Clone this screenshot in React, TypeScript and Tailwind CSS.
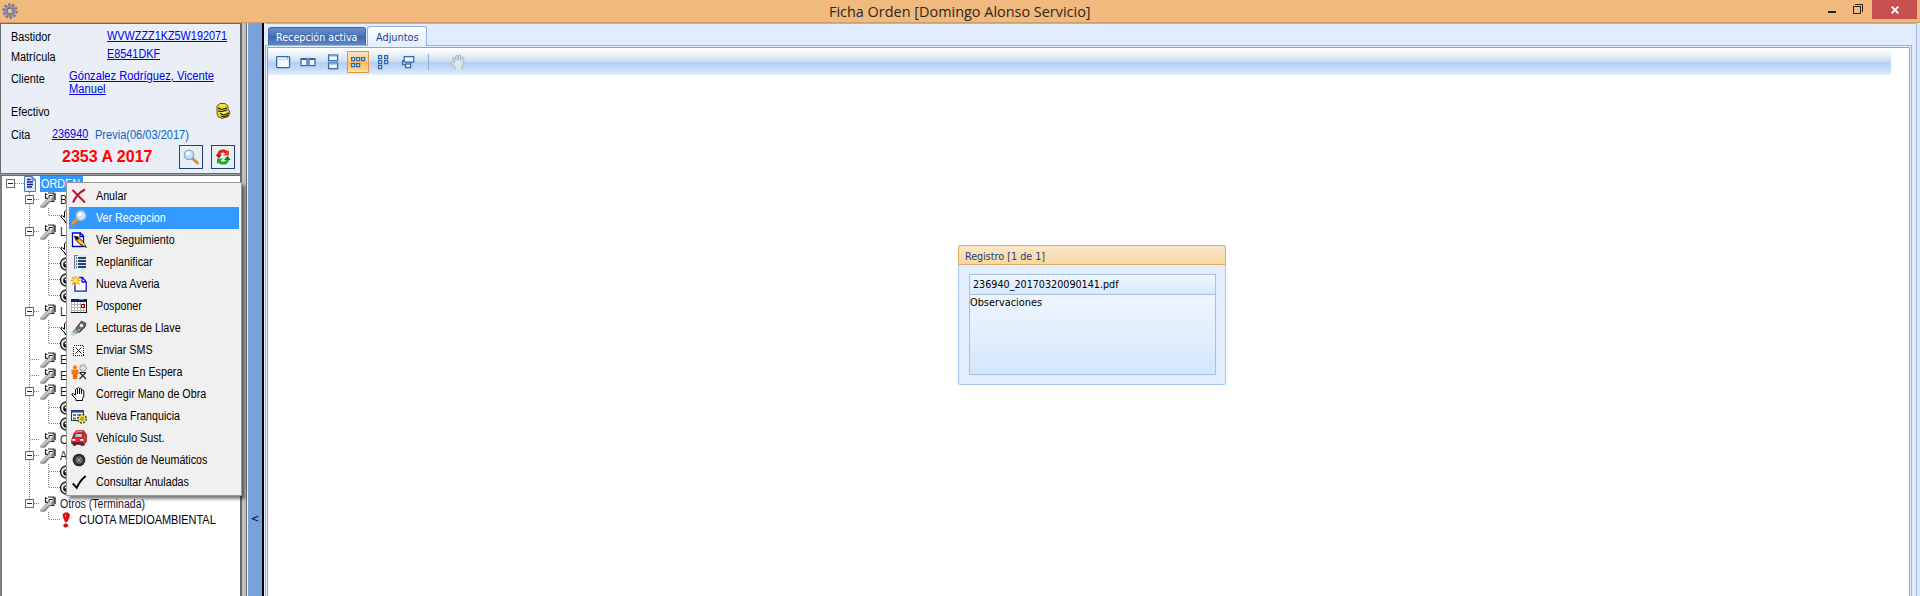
import React from "react";

const MS_BASE = "block w-max origin-left whitespace-nowrap text-[12px] leading-3 font-['Liberation_Sans',sans-serif]";
const MS = `${MS_BASE} scale-x-[0.905]`;
const TAHOMA_BASE = "block w-max origin-left whitespace-nowrap text-[11px] leading-3 font-['DejaVu_Sans_Condensed','DejaVu_Sans',sans-serif] [font-stretch:condensed]";
const TAHOMA = `${TAHOMA_BASE} scale-x-[0.97]`;

type IconProps = { children: React.ReactNode; size?: number; crisp?: boolean };

function Icon({ children, size = 16, crisp = false }: IconProps) {
  return (
    <svg width={size} height={size} viewBox="0 0 16 16" fill="none" className="block shrink-0" shapeRendering={crisp ? "crispEdges" : "auto"}>
      {children}
    </svg>
  );
}

const Handset = () => (
  <path d="M5 14.5 V13 L1 9 V7.8 H2.5 L4.5 9.2 V3.5 L5.5 2.7 L6.5 3.5 V2.3 L7.5 1.5 L8.5 2.3 V3 L9.5 2.2 L10.5 3 V4.5 L11.7 3.9 L12.8 5 V10 L11.5 12.7 V14.5 Z M6.5 3.5 V8 M8.5 3 V8 M10.5 4.5 V8" fill="#fff" stroke="#000" strokeWidth="1" />
);

const Wrench = () => (
  <Icon>
    <path d="M0.5 13.5 L6.5 7.5 L5.5 4.5 L8 6.5 H11 L12.5 4.5 V1 H15.5 V8 L13.5 10 L9.5 10.5 L5 15.8 L0.5 15.8 Z" fill="#8c8c8c" />
    <path d="M5.5 1 V6.5 M5 2.5 H7.5 M5 6.3 H8 M8 1 H14.5 M15 1.5 V8 M9 3.5 H12.5 M9 3.5 V6 M11 9.5 H14.5" stroke="#222" strokeWidth="1.1" />
    <path d="M2 14 L8.5 8 H11.5" stroke="#d8d8d8" strokeWidth="1.4" />
  </Icon>
);

const Eye = () => (
  <Icon>
    <circle cx="6.5" cy="8" r="6" fill="#e8e8e8" stroke="#222" strokeWidth="1.3" />
    <circle cx="6.5" cy="8.5" r="3.3" fill="#111" />
    <circle cx="5.7" cy="7.5" r="1" fill="#fff" />
  </Icon>
);

const menuItems: { label: string; icon: React.ReactNode }[] = [
  { label: "Anular", icon: <Icon><path d="M1.5 2 L14 14.5 M14 1.5 C9 4 4.5 9 2 14.5" stroke="#c8102e" strokeWidth="2" /></Icon> },
  {
    label: "Ver Recepcion",
    icon: (
      <Icon>
        <path d="M1 14.5 L7 9.5" stroke="#d98032" strokeWidth="3" strokeLinecap="round" />
        <path d="M1 13.3 L6 9" stroke="#f5bd82" strokeWidth="1" />
        <circle cx="10" cy="5.6" r="4.9" fill="#c8ebfb" stroke="#9ab6cc" strokeWidth="1.4" />
        <circle cx="8.8" cy="4.2" r="2" fill="#fff" />
      </Icon>
    ),
  },
  {
    label: "Ver Seguimiento",
    icon: (
      <Icon>
        <path d="M1.5 1 H9.5 L12.5 4 V14.5 H1.5 Z M9 1 V4.5 H12.5" fill="#fff" stroke="#0000c8" strokeWidth="1.3" />
        <path d="M3.5 4 L8 5.5 L12 9.5 L15.5 15.5 L9 12.5 L5 8.5 Z" fill="#e8901a" stroke="#111" strokeWidth="0.8" />
        <path d="M3.5 4 L7 5 L7.5 7 L5.5 8 Z" fill="#000" />
        <path d="M8 8.5 L13.5 13" stroke="#ffe04a" strokeWidth="1.4" />
      </Icon>
    ),
  },
  {
    label: "Replanificar",
    icon: (
      <Icon crisp>
        <rect x="3" y="1" width="12" height="14" fill="#d9e8f4" />
        <path d="M3.5 1 V15 M3 1.5 H7" stroke="#8a62b8" />
        <path d="M7 4 H15 M7 7 H15 M7 10 H15 M7 13 H15" stroke="#25456f" strokeWidth="1.5" />
        <path d="M5 4 H6 M5 7 H6 M5 10 H6 M5 13 H6" stroke="#3d9d74" strokeWidth="1.5" />
      </Icon>
    ),
  },
  {
    label: "Nueva Averia",
    icon: (
      <Icon>
        <path d="M4 4 V15.2 H15.2 V6 L11.5 1.5 H7 M11 1.5 V6 H15" fill="#fff" stroke="#1010e0" strokeWidth="1.3" />
        <path d="M4.5 0 V10 M0 4.5 H9.5 M1 1 L8.5 8.5 M8.5 1 L1 8.5" stroke="#f0a800" strokeWidth="1.5" />
        <circle cx="4.6" cy="4.6" r="2" fill="#ffef5a" />
      </Icon>
    ),
  },
  {
    label: "Posponer",
    icon: (
      <Icon crisp>
        <rect x="0" y="1" width="16" height="14" fill="#fff" />
        <path d="M0 6.5 H16 M0 9.5 H16 M0 12.5 H16 M3.5 4 V14 M6.5 4 V14 M9.5 4 V14 M12.5 4 V14 M0.5 3 V14" stroke="#b5b5b5" />
        <rect x="0" y="1" width="16" height="3" fill="#0c1c74" />
        <rect x="8" y="1" width="5" height="1" fill="#7888ca" />
        <path d="M15.5 2 V15 M0 14.5 H16" stroke="#111" />
        <rect x="10.5" y="6.5" width="3" height="3" stroke="#b00000" />
      </Icon>
    ),
  },
  {
    label: "Lecturas de Llave",
    icon: (
      <Icon>
        <path d="M5 8 L10.5 1 L15 3.5 L14 7 L8.5 12.5 L5 11 Z" fill="#666" stroke="#333" strokeWidth="0.8" />
        <path d="M4 9 L2 11.5 L5.5 13.5 L7.5 12" fill="#aaa" stroke="#777" strokeWidth="0.8" />
        <path d="M1.5 11.5 L0.8 15 M4.5 13 L2 15.5" stroke="#9fdd9f" strokeWidth="1.5" />
        <circle cx="10.5" cy="5.5" r="1.7" fill="#eee" />
        <path d="M7 9.5 L9 10.5" stroke="#ddd" />
      </Icon>
    ),
  },
  {
    label: "Enviar SMS",
    icon: (
      <Icon>
        <rect x="2.5" y="3.5" width="10" height="10" fill="#fff" stroke="#111" strokeDasharray="1 1" shapeRendering="crispEdges" />
        <path d="M4.5 5.5 L10.5 11.5 M10.5 5.5 L4.5 11.5" stroke="#222" strokeWidth="1" />
      </Icon>
    ),
  },
  {
    label: "Cliente En Espera",
    icon: (
      <Icon>
        <circle cx="4" cy="3.3" r="2" fill="#f47a10" />
        <path d="M0.5 5.5 H7.5 V10.5 H6.3 V15 H1.8 V10.5 H0.5 Z" fill="#f47a10" />
        <path d="M4 10 V15" stroke="#d65500" />
        <circle cx="12" cy="4" r="3.2" fill="#cfe3ef" stroke="#8a9aa8" />
        <path d="M8.5 8.5 L15 15 M15 8.5 L8.5 15 M9 8.5 H15" stroke="#222" strokeWidth="1.1" />
      </Icon>
    ),
  },
  { label: "Corregir Mano de Obra", icon: <Icon><Handset /></Icon> },
  {
    label: "Nueva Franquicia",
    icon: (
      <Icon>
        <rect x="0.5" y="2.5" width="12" height="10" fill="#fff" stroke="#2b3a55" />
        <rect x="0" y="2" width="13" height="2.5" fill="#1c4590" />
        <path d="M2 7 H5 M2 10.5 H5" stroke="#2f9848" strokeWidth="2" />
        <path d="M6 7 H9 M6 10 H8" stroke="#356ac8" strokeWidth="1.5" />
        <circle cx="11" cy="10.8" r="4" stroke="#4a4000" strokeWidth="1.8" strokeDasharray="2 1.1" />
        <circle cx="11" cy="10.8" r="3.5" fill="#f5e030" />
        <circle cx="11" cy="10.8" r="1.3" fill="#fff" stroke="#333" strokeWidth="0.7" />
      </Icon>
    ),
  },
  {
    label: "Vehículo Sust.",
    icon: (
      <Icon>
        <path d="M1 9 L3.5 2.5 L6 0.6 H12.5 L15.4 4.5 V11.5 L13 14.5 H2 L0.5 12.5 Z" fill="#f02a2a" stroke="#a01010" strokeWidth="0.8" />
        <path d="M3.2 7.5 L5 3.5 H11 L11.7 7.5 Z M12.8 6.5 L12.2 3 L14.5 5.5 Z" fill="#a9c7ee" stroke="#511" strokeWidth="0.6" />
        <path d="M4.5 2.7 L7 1.3 H11.5" stroke="#ff9a9a" />
        <rect x="1.3" y="9" width="3" height="1.8" fill="#fff" />
        <rect x="9.3" y="9" width="3" height="1.8" fill="#fff" />
        <path d="M0.5 13 H12.5 M2 15 H5 M9.5 15 H13.5" stroke="#22284a" strokeWidth="1.5" />
      </Icon>
    ),
  },
  {
    label: "Gestión de Neumáticos",
    icon: (
      <Icon>
        <circle cx="8" cy="8" r="6.3" fill="#2b2829" />
        <circle cx="8" cy="8" r="3.5" fill="#8a8687" stroke="#555" />
        <path d="M8 5 V11 M5 8 H11" stroke="#444" />
        <circle cx="8" cy="8" r="1" fill="#ccc" />
      </Icon>
    ),
  },
  { label: "Consultar Anuladas", icon: <Icon><path d="M1.8 9.3 L5.7 13.8 C8 9 11 4.5 14.8 2" stroke="#000" strokeWidth="2" /></Icon> },
];

type TreeRowData = { level: 1 | 2; kind: "wrench" | "hand" | "eye" | "alert"; text?: string; box?: boolean; last?: boolean };

const treeRows: TreeRowData[] = [
  { level: 1, kind: "wrench", text: "B", box: true },
  { level: 2, kind: "hand", last: true },
  { level: 1, kind: "wrench", text: "L", box: true },
  { level: 2, kind: "hand" },
  { level: 2, kind: "eye" },
  { level: 2, kind: "eye" },
  { level: 2, kind: "eye", last: true },
  { level: 1, kind: "wrench", text: "L", box: true },
  { level: 2, kind: "hand" },
  { level: 2, kind: "eye", last: true },
  { level: 1, kind: "wrench", text: "E" },
  { level: 1, kind: "wrench", text: "E" },
  { level: 1, kind: "wrench", text: "E", box: true },
  { level: 2, kind: "eye" },
  { level: 2, kind: "eye", last: true },
  { level: 1, kind: "wrench", text: "O" },
  { level: 1, kind: "wrench", text: "A", box: true },
  { level: 2, kind: "eye" },
  { level: 2, kind: "eye", last: true },
  { level: 1, kind: "wrench", text: "Otros (Terminada)", box: true, last: true },
  { level: 2, kind: "alert", text: "CUOTA MEDIOAMBIENTAL", last: true },
];

function Expander({ x }: { x: number }) {
  return (
    <g shapeRendering="crispEdges">
      <rect x={x - 4.5} y="3.5" width="8" height="8" fill="#fff" stroke="#6b6b6b" />
      <path d={`M${x - 3} 7.5 H${x + 2}`} stroke="#222" />
    </g>
  );
}

function TreeRow({ row, final }: { row: TreeRowData; final: boolean }) {
  const first = row.level === 1;
  return (
    <div className="flex h-4 items-center">
      <svg width={first ? 38 : 58} height="16" className="block shrink-0">
        <g stroke="#808080" strokeDasharray="1 1" shapeRendering="crispEdges">
          {!final && <path d={first && row.last ? "M27.5 0 V8" : "M27.5 0 V16"} />}
          {first ? <path d="M28 7.5 H38" /> : <path d={`M46.5 0 V${row.last ? 8 : 16} M47 7.5 H58`} />}
        </g>
        {row.box && <Expander x={28} />}
      </svg>
      {row.kind === "wrench" && <Wrench />}
      {row.kind === "eye" && <Eye />}
      {row.kind === "hand" && <Icon><Handset /></Icon>}
      {row.kind === "alert" && (
        <Icon>
          <path d="M2.8 2.5 L5 0.8 H8 L9.6 2.5 L9 6 L6.8 10 H5.4 L3.5 6 Z" fill="#e00d0d" stroke="#a00" strokeWidth="0.5" />
          <ellipse cx="5.8" cy="13.5" rx="2.2" ry="1.8" fill="#e00d0d" stroke="#a00" strokeWidth="0.5" />
          <path d="M5.5 2.5 V5" stroke="#ff9a9a" />
        </Icon>
      )}
      {row.text && (
        <span className={first ? "pl-1" : "pl-[3px]"}>
          <span className={`${MS_BASE} ${first ? "scale-x-[0.88] text-[#14143c]" : "scale-x-[0.91] text-black"}`}>{row.text}</span>
        </span>
      )}
    </div>
  );
}

const LINK = "text-[#0000f0] underline underline-offset-1 decoration-1";

function OrderInfo() {
  return (
    <section className="flex h-[150px] flex-col border-l border-t border-[#696969] bg-[#eaeff7] pl-2.5 pr-[5px] text-black">
      <div className="flex h-[21px]">
        <div className="w-24 shrink-0 pt-[7px]"><span className={MS}>Bastidor</span></div>
        <div className="pt-[6px]"><span className={`${MS} ${LINK}`}>WVWZZZ1KZ5W192071</span></div>
      </div>
      <div className="flex h-[21px]">
        <div className="w-24 shrink-0 pt-[6px]"><span className={MS}>Matrícula</span></div>
        <div className="pt-[3px]"><span className={`${MS} ${LINK}`}>E8541DKF</span></div>
      </div>
      <div className="flex h-9">
        <div className="w-[58px] shrink-0 pt-[7px]"><span className={MS}>Cliente</span></div>
        <div className="flex flex-col gap-px pt-1">
          <span className={`${MS_BASE} ${LINK} scale-x-[0.93]`}>Gónzalez Rodríguez, Vicente</span>
          <span className={`${MS_BASE} ${LINK} scale-x-[0.93]`}>Manuel</span>
        </div>
      </div>
      <div className="flex h-6 items-start justify-between pr-1">
        <div className="pt-1"><span className={MS}>Efectivo</span></div>
        <div className="pt-px">
          <Icon>
            <path d="M2 3 L5 0.5 H10 L13 3 V6 L15 9 L13.5 13.5 L7 15.5 L3 13.5 L2 10 Z" fill="#ead520" stroke="#5b4a00" strokeWidth="0.9" />
            <path d="M3 5 L7 6.5 L12 5 M3 8 L7 8.5 L12 7 M5 10.5 L9 12 L14 10 M6 13 L9 14 L13.5 12" stroke="#111" strokeWidth="1.1" />
            <path d="M5 2.5 H10 M7 9.8 H11" stroke="#fff36a" strokeWidth="1.5" />
          </Icon>
        </div>
      </div>
      <div className="flex h-[19px]">
        <div className="w-[41px] pt-[3px]"><span className={MS}>Cita</span></div>
        <div className="w-[43px] pt-[2px]"><span className={`${MS} ${LINK}`}>236940</span></div>
        <div className="pt-[3px]"><span className={`${MS_BASE} scale-x-[0.92] text-[#0a64c8]`}>Previa(06/03/2017)</span></div>
      </div>
      <div className="flex h-6 items-center">
        <div className="w-[117px] shrink-0 pl-[51px]">
          <span className="block w-max whitespace-nowrap text-[16px] font-bold leading-4 text-[#f00] font-['Liberation_Sans',sans-serif]">2353 A 2017</span>
        </div>
        <div className="ml-auto flex gap-2">
          <button className="grid size-6 place-items-center border border-[#27416e]">
            <Icon>
              <path d="M9.5 9.5 L14.5 14" stroke="#d9893b" strokeWidth="2.8" strokeLinecap="round" />
              <circle cx="6" cy="5.8" r="4.7" fill="#bde8fb" stroke="#8fa7bd" strokeWidth="1.3" />
              <circle cx="5" cy="4.6" r="2" fill="#fff" />
            </Icon>
          </button>
          <button className="grid size-6 place-items-center border border-[#27416e]">
            <Icon>
              <path d="M13 5 C11 1.5 5 0.5 3.8 5 V7" stroke="#e02010" strokeWidth="2.8" />
              <path d="M0.5 5.5 H7 L3.8 9.5 Z" fill="#c81010" />
              <path d="M8 6.5 L14 6.5 V1 Z" fill="#f04020" />
              <path d="M3 11 C5 14.8 11 15.5 12.4 11.5 V9.5" stroke="#18b018" strokeWidth="2.8" />
              <path d="M9 11 H15.7 L12.4 6.8 Z" fill="#0a8a10" />
              <path d="M8 9.5 H2 V15 Z" fill="#18b018" />
            </Icon>
          </button>
        </div>
      </div>
    </section>
  );
}

function ContextMenu() {
  return (
    <div className="absolute left-[66px] top-[182px] h-[314px] w-[176px] border border-[#979797] bg-[#f0f0f0] px-0.5 py-0.5 shadow-[3px_3px_3px_rgba(0,0,0,0.5)]">
      {menuItems.map((item, i) => (
        <div key={item.label} className={`flex h-[22px] items-center pb-px pl-[2px] ${i === 1 ? "bg-[#3399ff] text-white" : "text-black"}`}>
          {item.icon}
          <span className="pl-[9px]"><span className={`${MS_BASE} scale-x-[0.893]`}>{item.label}</span></span>
        </div>
      ))}
    </div>
  );
}

function Sidebar() {
  return (
    <aside className="flex h-full w-[264px] shrink-0">
      <div className="flex w-[240px] shrink-0 flex-col">
        <OrderInfo />
        <div className="h-[3px] border-y border-[#696969] bg-[#a0a0a0]" />
        <div className="flex-1 border-l-2 border-[#7b7b7b] bg-white">
          <div className="flex h-4 items-center">
            <svg width="22" height="16" className="block shrink-0">
              <path d="M13 7.5 H22" stroke="#808080" strokeDasharray="1 1" shapeRendering="crispEdges" />
              <Expander x={9} />
            </svg>
            <div className="-ml-px mr-px">
              <Icon>
                <path d="M1.5 0.5 H9.5 L12.5 3.5 V15.5 H1.5 Z" fill="#dbe8fb" stroke="#4a7ab8" />
                <path d="M9 1 V4 H12" fill="#6ea2dc" stroke="#3d70b5" />
                <path d="M4 3.5 H7.5 M4 6 H10 M4 8.5 H10 M4 11 H9" stroke="#181890" strokeWidth="1.3" />
              </Icon>
            </div>
            <div className="flex h-4 w-[43px] items-center bg-[#3399ff] pl-px text-white"><span className={`${MS_BASE} scale-x-[0.9]`}>ORDEN</span></div>
          </div>
          {treeRows.map((row, i) => <TreeRow key={i} row={row} final={i === treeRows.length - 1} />)}
        </div>
      </div>
      <div className="w-[7px] shrink-0 border-l-2 border-r border-[#696969] bg-[#c0c0c0]" />
      <div className="w-px shrink-0 bg-[#f4f4f4]" />
      <div className="flex w-[14px] shrink-0 items-start justify-center bg-[#78a2db] pt-[490px] text-[10px] leading-3 text-black font-['DejaVu_Sans',sans-serif]">&lt;</div>
      <div className="w-0.5 shrink-0 bg-black" />
    </aside>
  );
}

const box = { fill: "#eef6ff", stroke: "#3568b0", strokeWidth: 1.3 };

const toolIcons: { name: string; node: React.ReactNode }[] = [
  { name: "single", node: <Icon><rect x="1.6" y="2.6" width="13" height="11" rx="1" {...box} /><path d="M2 5.5 H14" stroke="#b9d5f5" /><path d="M12 4 H13" stroke="#3568b0" /></Icon> },
  { name: "columns", node: <Icon><rect x="1" y="4.6" width="6" height="7" {...box} /><rect x="9" y="4.6" width="6" height="7" {...box} /><path d="M1 5.5 H7 M9 5.5 H15" stroke="#3568b0" /></Icon> },
  { name: "rows", node: <Icon><rect x="3.6" y="1" width="9" height="5.7" {...box} /><rect x="3.6" y="9" width="9" height="5.7" {...box} /><path d="M4 2.2 H12 M4 10.2 H12" stroke="#9dc1ec" /></Icon> },
  { name: "grid", node: <Icon><g {...box}><rect x="1.6" y="3.6" width="3" height="3" /><rect x="6.6" y="3.6" width="3" height="3" /><rect x="11.6" y="3.6" width="3" height="3" /><rect x="1.6" y="9.6" width="3" height="3" /><rect x="6.6" y="9.6" width="3" height="3" /></g></Icon> },
  { name: "list", node: <Icon><g {...box}><rect x="3.6" y="1.6" width="3" height="3" /><rect x="9.6" y="1.6" width="3" height="3" /><rect x="3.6" y="6.6" width="3" height="3" /><rect x="9.6" y="6.6" width="3" height="3" /><rect x="3.6" y="11.6" width="3" height="3" /></g></Icon> },
  { name: "cascade", node: <Icon><path d="M4.6 6.6 H2.6 V10.5 H6.5" {...box} /><rect x="5.6" y="10" width="5" height="3.6" {...box} /><rect x="4.2" y="2.6" width="9.5" height="5.5" {...box} /><path d="M10.5 8.5 V10.5" stroke="#3568b0" strokeWidth="1.3" /></Icon> },
];

function Toolbar() {
  return (
    <div className="mr-[18px] mt-px flex h-[26px] items-center bg-[linear-gradient(#fdfefe,#dde8f1_35%,#cbdcec_49%,#b2cff0_50%,#c3daf5_75%,#e4f0fd)] pl-1">
      {toolIcons.map((t) => (
        <button key={t.name} className={`mr-[3px] grid h-[22px] w-[22px] place-items-center ${t.name === "grid" ? "border border-[#d89650] bg-[linear-gradient(#fde3bd,#fccf8b_50%,#fbb94e_52%,#ffe394)]" : ""}`}>
          {t.node}
        </button>
      ))}
      <div className="ml-[6px] h-4 w-px bg-[#88aadb]" />
      <div className="ml-[21px]">
        <Icon>
          <path d="M5.5 15.5 L4.5 12.5 L1 9 L2 7.5 L4.5 9 L2.5 4 L4 3.2 L6 6.5 L5.5 2 L7 1.3 L8.2 6 L8.8 1 L10.5 1.2 L10.5 6.5 L12.5 3 L14 4 L13 11 L12 13 V15.5" fill="#dce4ec" stroke="#a8b4c2" strokeWidth="1" />
        </Icon>
      </div>
    </div>
  );
}

function RecordCard() {
  return (
    <article className="ml-[690px] mt-[170px] h-[140px] w-[268px] rounded-[2px] border border-[#a9c8f0] bg-[#e2edfd]">
      <header className="-mx-px -mt-px flex h-5 items-center rounded-t-[2px] border border-[#dcae68] bg-[linear-gradient(#fae7c9,#f9d7a3)] pl-1.5 pt-[3px] text-[#1e3c7c]">
        <span className={TAHOMA}>Registro [1 de 1]</span>
      </header>
      <div className="mx-[10px] mt-[9px] w-[247px] border border-[#a4c0e2] text-black">
        <div className="flex h-[20px] items-center border-b border-[#a4c0e2] bg-[linear-gradient(#eff6ff,#d8e8fb)] pl-[3px]">
          <span className={TAHOMA}>236940_20170320090141.pdf</span>
        </div>
        <div className="h-[79px] bg-[linear-gradient(#eff6ff,#d4e6fa)] pt-0.5">
          <span className={`${TAHOMA_BASE} scale-x-[0.985]`}>Observaciones</span>
        </div>
      </div>
    </article>
  );
}

function Workspace() {
  return (
    <main className="flex min-w-0 flex-1 flex-col border-r-[3px] border-[#e2e7ef] bg-[#e1edff] pl-px">
      <div className="flex h-[573px] flex-col border-r border-t border-[#98b8e6]">
        <nav className="flex h-[21px] items-end pl-[3px]">
          <button className="flex h-[18px] w-[98px] items-center justify-start rounded-t-[3px] border border-b-0 border-[#4066aa] bg-[linear-gradient(#6b90d0,#4c74b9_45%,#3d67ae_50%,#5e88cb)] pl-[7px] pt-0.5 text-white">
            <span className={TAHOMA}>Recepción activa</span>
          </button>
          <button className="relative ml-px -mb-px flex h-5 w-[60px] items-center rounded-t-[3px] border border-b-0 border-[#8fb2e6] bg-[linear-gradient(#ffffff,#e1edff)] pl-2 pt-0.5 text-[#1c3f8c]">
            <span className={`${TAHOMA_BASE} scale-x-[0.985]`}>Adjuntos</span>
          </button>
        </nav>
        <div className="mr-[4px] flex-1 border border-b-0 border-[#93b4e4] bg-[#e6f0ff] pl-px pr-px pt-px">
          <div className="h-full border border-b-0 border-[#86a6d6] bg-white">
            <Toolbar />
            <RecordCard />
          </div>
        </div>
      </div>
    </main>
  );
}

function TitleBar() {
  return (
    <header className="flex h-[23px] shrink-0 items-start border-b border-[#cd9e66] bg-[#f0b97d]">
      <div className="pl-0.5 pt-[3px]">
        <Icon>
          <circle cx="8" cy="8" r="6.6" stroke="#6a6a86" strokeWidth="2" strokeDasharray="2.4 1.75" />
          <circle cx="8" cy="8" r="4.5" stroke="#8c8cb2" strokeWidth="2.8" />
          <circle cx="8" cy="8" r="3" stroke="#50506e" strokeWidth="0.8" />
        </Icon>
      </div>
      <h1 className="ml-[811px] block w-max origin-left scale-x-[0.962] whitespace-nowrap pt-px text-[15px] leading-5 text-[#2b2620] font-['Open_Sans',sans-serif]">Ficha Orden [Domingo Alonso Servicio]</h1>
      <div className="ml-auto flex h-[19px] items-start pr-[3px]">
        <svg width="44" height="19" className="block" shapeRendering="crispEdges" fill="none">
          <path d="M0 12 H8" stroke="#222" strokeWidth="2" />
          <path d="M25.5 6.5 H32.5 V13.5 H25.5 Z M25 6 H33 M27 4.5 H34.5 V12" stroke="#2c241c" />
        </svg>
        <div className="grid h-[19px] w-[45px] place-items-center bg-[#c75050]">
          <svg width="8" height="8" viewBox="0 0 8 8"><path d="M0.7 0.7 L7.3 7.3 M7.3 0.7 L0.7 7.3" stroke="#fff" strokeWidth="1.9" /></svg>
        </div>
      </div>
    </header>
  );
}

export default function App() {
  return (
    <div className="relative flex h-[596px] w-[1920px] flex-col overflow-hidden bg-white">
      <TitleBar />
      <div className="flex h-[573px]">
        <Sidebar />
        <Workspace />
      </div>
      <ContextMenu />
    </div>
  );
}
